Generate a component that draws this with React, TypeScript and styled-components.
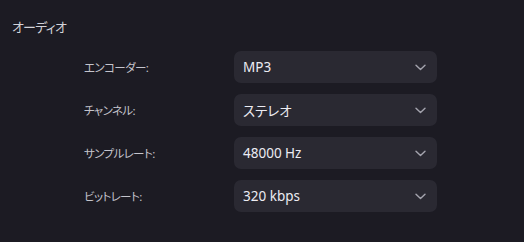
import styled, { createGlobalStyle } from "styled-components";

const GlobalStyle = createGlobalStyle`
  html, body {
    margin: 0;
    background: #1c1b23;
  }
  body {
    font-family: "Noto Sans", "Noto Sans CJK JP", sans-serif;
    font-feature-settings: "palt";
  }
`;

const Page = styled.div`
  width: 524px;
  height: 242px;
  box-sizing: border-box;
  padding: 18px 12px 0 12px;
  background: #1c1b23;
`;

const Heading = styled.div`
  font-size: 13px;
  line-height: 18px;
  color: #d2d2d8;
  letter-spacing: -0.8px;
  margin-bottom: 15px;
`;

const Rows = styled.div`
  display: flex;
  flex-direction: column;
  gap: 11px;
  padding-left: 72px;
`;

const Row = styled.div`
  display: grid;
  grid-template-columns: 150px 203px;
  align-items: center;
  height: 32px;
`;

const Label = styled.div`
  font-size: 11.5px;
  color: #c4c4cc;
  letter-spacing: -0.6px;
`;

const Select = styled.div`
  height: 32px;
  box-sizing: border-box;
  padding: 0 11px 0 9px;
  border-radius: 7px;
  background: #2a2932;
  display: flex;
  align-items: center;
  justify-content: space-between;
`;

const Value = styled.span`
  font-size: 13.5px;
  color: #ececf2;
`;

const Chevron = () => (
  <svg width="11" height="7" viewBox="0 0 11 7" fill="none">
    <path
      d="M1 1.2 L5.5 5.6 L10 1.2"
      stroke="#a4a4ae"
      strokeWidth="1.4"
      strokeLinecap="round"
      strokeLinejoin="round"
    />
  </svg>
);

const settings = [
  { label: "エンコーダー:", value: "MP3" },
  { label: "チャンネル:", value: "ステレオ" },
  { label: "サンプルレート:", value: "48000 Hz" },
  { label: "ビットレート:", value: "320 kbps" },
];

export default function App() {
  return (
    <Page>
      <GlobalStyle />
      <Heading>オーディオ</Heading>
      <Rows>
        {settings.map((s) => (
          <Row key={s.label}>
            <Label>{s.label}</Label>
            <Select>
              <Value>{s.value}</Value>
              <Chevron />
            </Select>
          </Row>
        ))}
      </Rows>
    </Page>
  );
}
